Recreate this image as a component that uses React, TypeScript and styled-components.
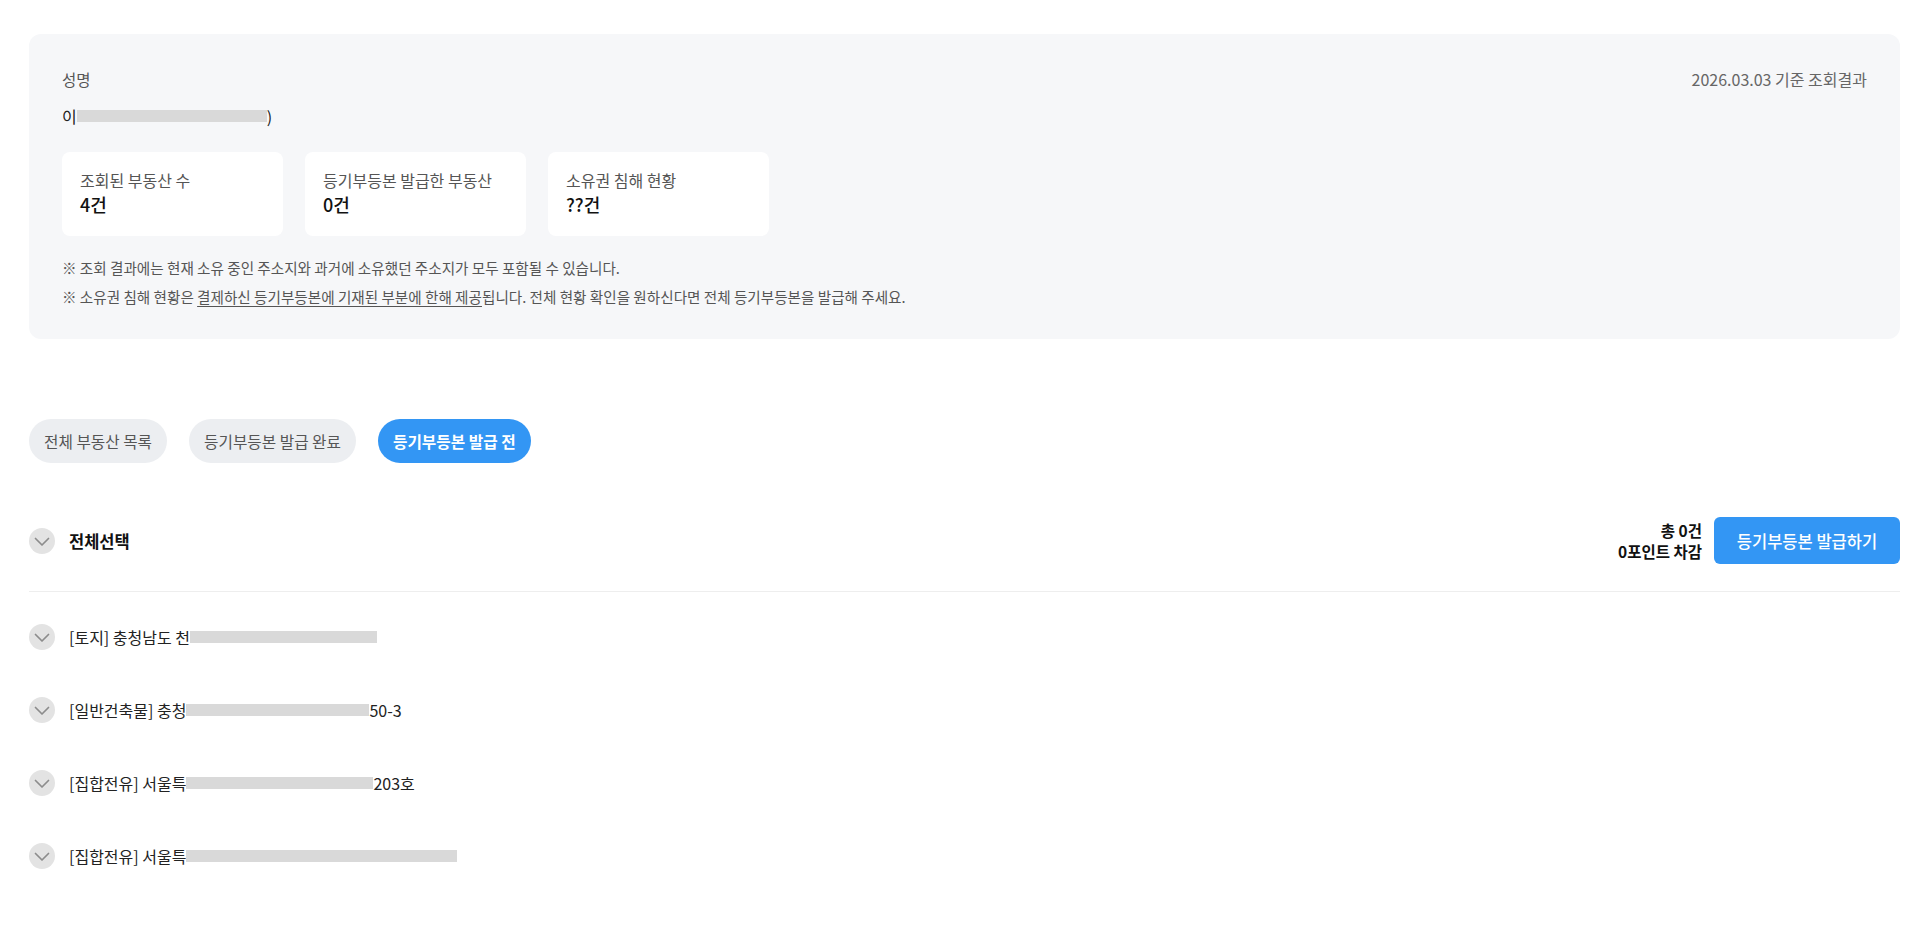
import styled, { createGlobalStyle } from "styled-components";

const GlobalStyle = createGlobalStyle`
  html, body {
    margin: 0;
    padding: 0;
    background: #ffffff;
    font-family: "Noto Sans CJK KR", "Noto Sans", sans-serif;
    color: #222222;
  }
  * {
    box-sizing: border-box;
  }
`;

const Page = styled.div`
  padding: 34px 20px 40px 29px;
`;

const Summary = styled.section`
  background-color: #f6f7f9;
  border-radius: 12px;
  padding: 33px 33px 31px 33px;
  display: flex;
  flex-direction: column;
`;

const SummaryHead = styled.div`
  display: flex;
  justify-content: space-between;
  align-items: center;
  height: 24px;
`;

const Label = styled.span`
  font-size: 15.5px;
  color: #555555;
  line-height: 24px;
`;

const BaseDate = styled.span`
  font-size: 16px;
  color: #666666;
  line-height: 24px;
`;

const NameLine = styled.div`
  display: flex;
  align-items: center;
  font-size: 16px;
  color: #222222;
  margin-top: 14px;
  line-height: 22px;
`;

const Redact = styled.span<{ w: number }>`
  display: inline-block;
  width: ${({ w }) => w}px;
  height: 12px;
  background-color: #d9d9d9;
  vertical-align: middle;
`;

const Stats = styled.div`
  display: flex;
  gap: 22px;
  margin-top: 25px;
`;

const StatCard = styled.div`
  width: 221px;
  height: 84px;
  background-color: #ffffff;
  border-radius: 8px;
  padding: 17px 18px;
  display: flex;
  flex-direction: column;
`;

const StatLabel = styled.span`
  font-size: 16px;
  color: #555555;
  line-height: 22px;
`;

const StatValue = styled.span`
  font-size: 18px;
  font-weight: 500;
  color: #111111;
  line-height: 26px;
`;

const Notes = styled.div`
  display: flex;
  flex-direction: column;
  gap: 7px;
  margin-top: 21px;
`;

const Note = styled.p`
  margin: 0;
  font-size: 14.6px;
  color: #555555;
  line-height: 22px;
`;

const Underline = styled.span`
  text-decoration: underline;
  text-underline-offset: 3px;
`;

const Tabs = styled.div`
  display: flex;
  gap: 22px;
  margin-top: 80px;
`;

const Tab = styled.button<{ active?: boolean }>`
  height: 44px;
  padding: 0 15px;
  border: none;
  border-radius: 22px;
  font-family: inherit;
  font-size: 15.7px;
  font-weight: ${({ active }) => (active ? 600 : 400)};
  color: ${({ active }) => (active ? "#ffffff" : "#555555")};
  background-color: ${({ active }) => (active ? "#3396f4" : "#eceef1")};
  cursor: pointer;
`;

const Toolbar = styled.div`
  display: flex;
  justify-content: space-between;
  align-items: center;
  margin-top: 54px;
  padding-bottom: 27px;
  border-bottom: 1px solid #eeeeee;
`;

const CheckRow = styled.label`
  display: flex;
  align-items: center;
  gap: 14px;
`;

const Check = styled.span`
  width: 26px;
  height: 26px;
  border-radius: 50%;
  background-color: #e3e3e3;
  display: inline-flex;
  align-items: center;
  justify-content: center;
  flex-shrink: 0;
`;

const AllText = styled.span`
  font-size: 16.5px;
  font-weight: 700;
  color: #111111;
`;

const Actions = styled.div`
  display: flex;
  align-items: center;
  gap: 12px;
`;

const Total = styled.div`
  display: flex;
  flex-direction: column;
  align-items: flex-end;
  font-size: 15.5px;
  font-weight: 700;
  color: #111111;
  line-height: 21px;
`;

const IssueButton = styled.button`
  width: 186px;
  height: 47px;
  border: none;
  border-radius: 6px;
  background-color: #3396f4;
  color: #ffffff;
  font-family: inherit;
  font-size: 16.5px;
  font-weight: 500;
  cursor: pointer;
`;

const List = styled.ul`
  list-style: none;
  margin: 32px 0 0 0;
  padding: 0;
  display: flex;
  flex-direction: column;
  gap: 47px;
`;

const Item = styled.li`
  display: flex;
  align-items: center;
  gap: 14px;
  height: 26px;
`;

const Address = styled.span`
  display: flex;
  align-items: center;
  font-size: 16px;
  color: #222222;
  white-space: pre;
`;

function Chevron() {
  return (
    <Check>
      <svg width="18" height="18" viewBox="0 0 18 18" fill="none">
        <path
          d="M2.5 6.5l6.5 6.5 6.5-6.5"
          stroke="#8c8c8c"
          strokeWidth="1.7"
          strokeLinecap="round"
          strokeLinejoin="round"
        />
      </svg>
    </Check>
  );
}

const items = [
  { head: "[토지] 충청남도 천", bar: 187, tail: "" },
  { head: "[일반건축물] 충청", bar: 183, tail: "50-3" },
  { head: "[집합전유] 서울특", bar: 187, tail: "203호" },
  { head: "[집합전유] 서울특", bar: 271, tail: "" },
];

export default function App() {
  return (
    <>
      <GlobalStyle />
      <Page>
        <Summary>
          <SummaryHead>
            <Label>성명</Label>
            <BaseDate>2026.03.03 기준 조회결과</BaseDate>
          </SummaryHead>
          <NameLine>
            이<Redact w={190} />)
          </NameLine>
          <Stats>
            <StatCard>
              <StatLabel>조회된 부동산 수</StatLabel>
              <StatValue>4건</StatValue>
            </StatCard>
            <StatCard>
              <StatLabel>등기부등본 발급한 부동산</StatLabel>
              <StatValue>0건</StatValue>
            </StatCard>
            <StatCard>
              <StatLabel>소유권 침해 현황</StatLabel>
              <StatValue>??건</StatValue>
            </StatCard>
          </Stats>
          <Notes>
            <Note>※ 조회 결과에는 현재 소유 중인 주소지와 과거에 소유했던 주소지가 모두 포함될 수 있습니다.</Note>
            <Note>
              ※ 소유권 침해 현황은 <Underline>결제하신 등기부등본에 기재된 부분에 한해 제공</Underline>됩니다. 전체 현황
              확인을 원하신다면 전체 등기부등본을 발급해 주세요.
            </Note>
          </Notes>
        </Summary>

        <Tabs>
          <Tab>전체 부동산 목록</Tab>
          <Tab>등기부등본 발급 완료</Tab>
          <Tab active>등기부등본 발급 전</Tab>
        </Tabs>

        <Toolbar>
          <CheckRow>
            <Chevron />
            <AllText>전체선택</AllText>
          </CheckRow>
          <Actions>
            <Total>
              <span>총 0건</span>
              <span>0포인트 차감</span>
            </Total>
            <IssueButton>등기부등본 발급하기</IssueButton>
          </Actions>
        </Toolbar>

        <List>
          {items.map((it, i) => (
            <Item key={i}>
              <Chevron />
              <Address>
                {it.head}
                <Redact w={it.bar} />
                {it.tail}
              </Address>
            </Item>
          ))}
        </List>
      </Page>
    </>
  );
}
